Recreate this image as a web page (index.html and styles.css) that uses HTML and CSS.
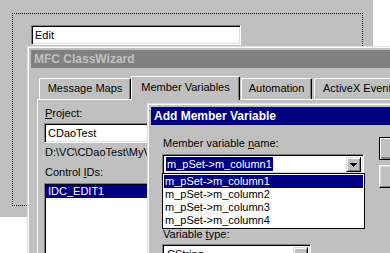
FILE: index.html
```html
<!DOCTYPE html>
<html lang="en">
<head>
    <meta charset="UTF-8">
    <meta name="viewport" content="width=device-width, initial-scale=1.0">
    <title>MFC ClassWizard</title>
    <link rel="stylesheet" href="styles.css">
</head>
<body>
    <div class="desktop">
        <!-- form being edited in the resource editor -->
        <div class="form">
            <div class="focus">
                <div class="edit">Edit</div>
            </div>
        </div>

        <!-- ClassWizard window (inactive) -->
        <div class="wizard">
            <div class="frame">
                <div class="caption inactive">MFC ClassWizard</div>
                <div class="tabs">
                    <div class="tab tab-maps">Message Maps</div>
                    <div class="tab tab-vars active">Member Variables</div>
                    <div class="tab tab-auto">Automation</div>
                    <div class="tab tab-activex">ActiveX Events</div>
                </div>
                <div class="page">
                    <div class="label"><u>P</u>roject:</div>
                    <div class="field project">CDaoTest</div>
                    <div class="path">D:\VC\CDaoTest\MyView.h, D:\VC\CDaoTest\MyView.cpp</div>
                    <div class="label ids">Control <u>I</u>Ds:</div>
                    <div class="listbox">
                        <div class="item selected">IDC_EDIT1</div>
                    </div>
                </div>
            </div>
        </div>

        <!-- Add Member Variable dialog -->
        <div class="dialog">
            <div class="frame">
                <div class="caption">Add Member Variable</div>
                <div class="dlg-body">
                    <div class="dlg-fields">
                        <div class="label">Member variable <u>n</u>ame:</div>
                        <div class="combo name">
                            <div class="combo-text"><span class="sel">m_pSet-&gt;m_column1</span></div>
                            <div class="combo-btn">
                                <svg width="7" height="4" viewBox="0 0 7 4"><path d="M0 0H7V1H6V2H5V3H4V4H3V3H2V2H1V1H0Z" fill="#000"/></svg>
                            </div>
                            <div class="dropdown">
                                <div class="item selected">m_pSet-&gt;m_column1</div>
                                <div class="item">m_pSet-&gt;m_column2</div>
                                <div class="item">m_pSet-&gt;m_column3</div>
                                <div class="item">m_pSet-&gt;m_column4</div>
                            </div>
                        </div>
                        <div class="label type">Variable <u>t</u>ype:</div>
                        <div class="combo kind">
                            <div class="combo-text">CString</div>
                            <div class="combo-btn">
                                <svg width="7" height="4" viewBox="0 0 7 4"><path d="M0 0H7V1H6V2H5V3H4V4H3V3H2V2H1V1H0Z" fill="#000"/></svg>
                            </div>
                        </div>
                    </div>
                    <div class="dlg-buttons">
                        <div class="button default">OK</div>
                        <div class="button">Cancel</div>
                    </div>
                </div>
            </div>
        </div>
    </div>
</body>
</html>
```

FILE: styles.css
```css
* {
    box-sizing: border-box;
}

body {
    margin: 0;
    background-color: #ffffff;
    font-family: 'Liberation Sans', Arial, sans-serif;
    font-size: 11px;
    color: #000000;
}

.desktop {
    position: relative;
    width: 390px;
    height: 253px;
    overflow: hidden;
}

/* form in the editor */
.form {
    position: absolute;
    left: 0;
    top: 0;
    width: 373px;
    height: 217px;
    background-color: #c0c0c0;
    padding: 13px 10px 11px 12px;
}

.focus {
    height: 100%;
    border: 1px dotted #000080;
    padding: 11px 0 0 18px;
}

.edit,
.field {
    height: 20px;
    background-color: #ffffff;
    border: 1px solid;
    border-color: #808080 #ffffff #ffffff #808080;
    box-shadow: inset 1px 1px #000000, inset -1px -1px #dfdfdf;
    padding: 0 3px;
    line-height: 18px;
    white-space: nowrap;
}

.edit {
    width: 210px;
}

/* window frames */
.wizard,
.dialog {
    position: absolute;
    background-color: #c0c0c0;
    border-left: 1px solid #dfdfdf;
    border-top: 1px solid #dfdfdf;
}

.wizard {
    left: 27px;
    top: 46px;
    width: 400px;
    height: 240px;
}

.dialog {
    left: 147px;
    top: 103px;
    width: 260px;
    height: 170px;
    z-index: 5;
}

.frame {
    height: 100%;
    border-left: 1px solid #ffffff;
    border-top: 1px solid #ffffff;
    padding: 2px;
}

.caption {
    height: 18px;
    line-height: 18px;
    padding-left: 3px;
    font-size: 12px;
    font-weight: bold;
    color: #ffffff;
    background-color: #000080;
    white-space: nowrap;
}

.caption.inactive {
    background-color: #808080;
    color: #c0c0c0;
}

/* tabs */
.tabs {
    display: flex;
    align-items: flex-end;
    height: 23px;
    margin-top: 8px;
    padding-left: 8px;
}

.tab {
    flex: none;
    height: 21px;
    line-height: 19px;
    text-align: center;
    white-space: nowrap;
    overflow: hidden;
    background-color: #c0c0c0;
    border-top: 1px solid #ffffff;
    border-left: 1px solid #ffffff;
    border-right: 1px solid #000000;
    border-radius: 2px 2px 0 0;
    box-shadow: inset -1px 0 #808080;
}

.tab.active {
    position: relative;
    z-index: 1;
    height: 24px;
    line-height: 20px;
    margin-bottom: -1px;
}

.tab-maps { width: 92px; }
.tab-vars { width: 109px; }
.tab-auto { width: 71px; margin-left: 1px; }
.tab-activex { width: 92px; margin-left: 2px; }

.page {
    height: 200px;
    margin-left: 6px;
    border-left: 1px solid #ffffff;
    border-top: 1px solid #ffffff;
    padding: 7px 0 0 6px;
}

.label {
    line-height: 13px;
    padding-left: 1px;
    white-space: nowrap;
}

.project {
    width: 200px;
    margin-top: 3px;
}

.path {
    margin-top: 3px;
    line-height: 13px;
    padding-left: 1px;
    white-space: nowrap;
}

.label.ids {
    margin-top: 7px;
}

.listbox {
    width: 200px;
    height: 90px;
    margin-top: 4px;
    background-color: #ffffff;
    border: 1px solid;
    border-color: #808080 #ffffff #ffffff #808080;
    box-shadow: inset 1px 1px #000000, inset -1px -1px #dfdfdf;
    padding: 1px;
}

.item {
    height: 13px;
    line-height: 13px;
    padding-left: 1px;
    white-space: nowrap;
}

.item.selected {
    background-color: #000080;
    color: #ffffff;
}

.listbox .item {
    padding-left: 2px;
}

/* dialog body */
.dlg-body {
    display: flex;
    padding: 12px 0 0 11px;
}

.dlg-fields {
    flex: none;
    width: 202px;
}

.combo {
    position: relative;
    display: flex;
    height: 20px;
    margin-top: 4px;
    background-color: #ffffff;
    border: 1px solid;
    border-color: #808080 #ffffff #ffffff #808080;
    box-shadow: inset 1px 1px #000000, inset -1px -1px #dfdfdf;
    padding: 2px 2px 2px 2px;
}

.combo.kind {
    width: 149px;
    margin-top: 3px;
}

.combo-text {
    flex: 1;
    line-height: 15px;
    white-space: nowrap;
    overflow: hidden;
}

.combo.kind .combo-text {
    padding-left: 2px;
}

.sel {
    display: inline-block;
    margin-left: 1px;
    padding: 0 1px;
    background-color: #000080;
    color: #ffffff;
}

.combo-btn {
    flex: none;
    width: 15px;
    height: 15px;
    display: flex;
    align-items: center;
    justify-content: center;
    background-color: #c0c0c0;
    border: 1px solid;
    border-color: #dfdfdf #000000 #000000 #dfdfdf;
    box-shadow: inset 1px 1px #ffffff, inset -1px -1px #808080;
}

.dropdown {
    position: absolute;
    z-index: 2;
    left: -1px;
    top: 18px;
    width: 203px;
    background-color: #ffffff;
    border: 1px solid #000000;
    padding: 1px 1px 1px 1px;
}

.label.type {
    margin-top: 54px;
}

.dlg-buttons {
    flex: none;
    margin-left: 15px;
}

.button {
    width: 75px;
    height: 23px;
    line-height: 21px;
    text-align: center;
    background-color: #c0c0c0;
    border: 1px solid;
    border-color: #ffffff #000000 #000000 #ffffff;
    box-shadow: inset -1px -1px #808080, inset 1px 1px #dfdfdf;
}

.button + .button {
    margin-top: 5px;
}

.button.default {
    border-color: #000000;
    box-shadow: inset 1px 1px #ffffff, inset -2px -2px #808080;
}
```
